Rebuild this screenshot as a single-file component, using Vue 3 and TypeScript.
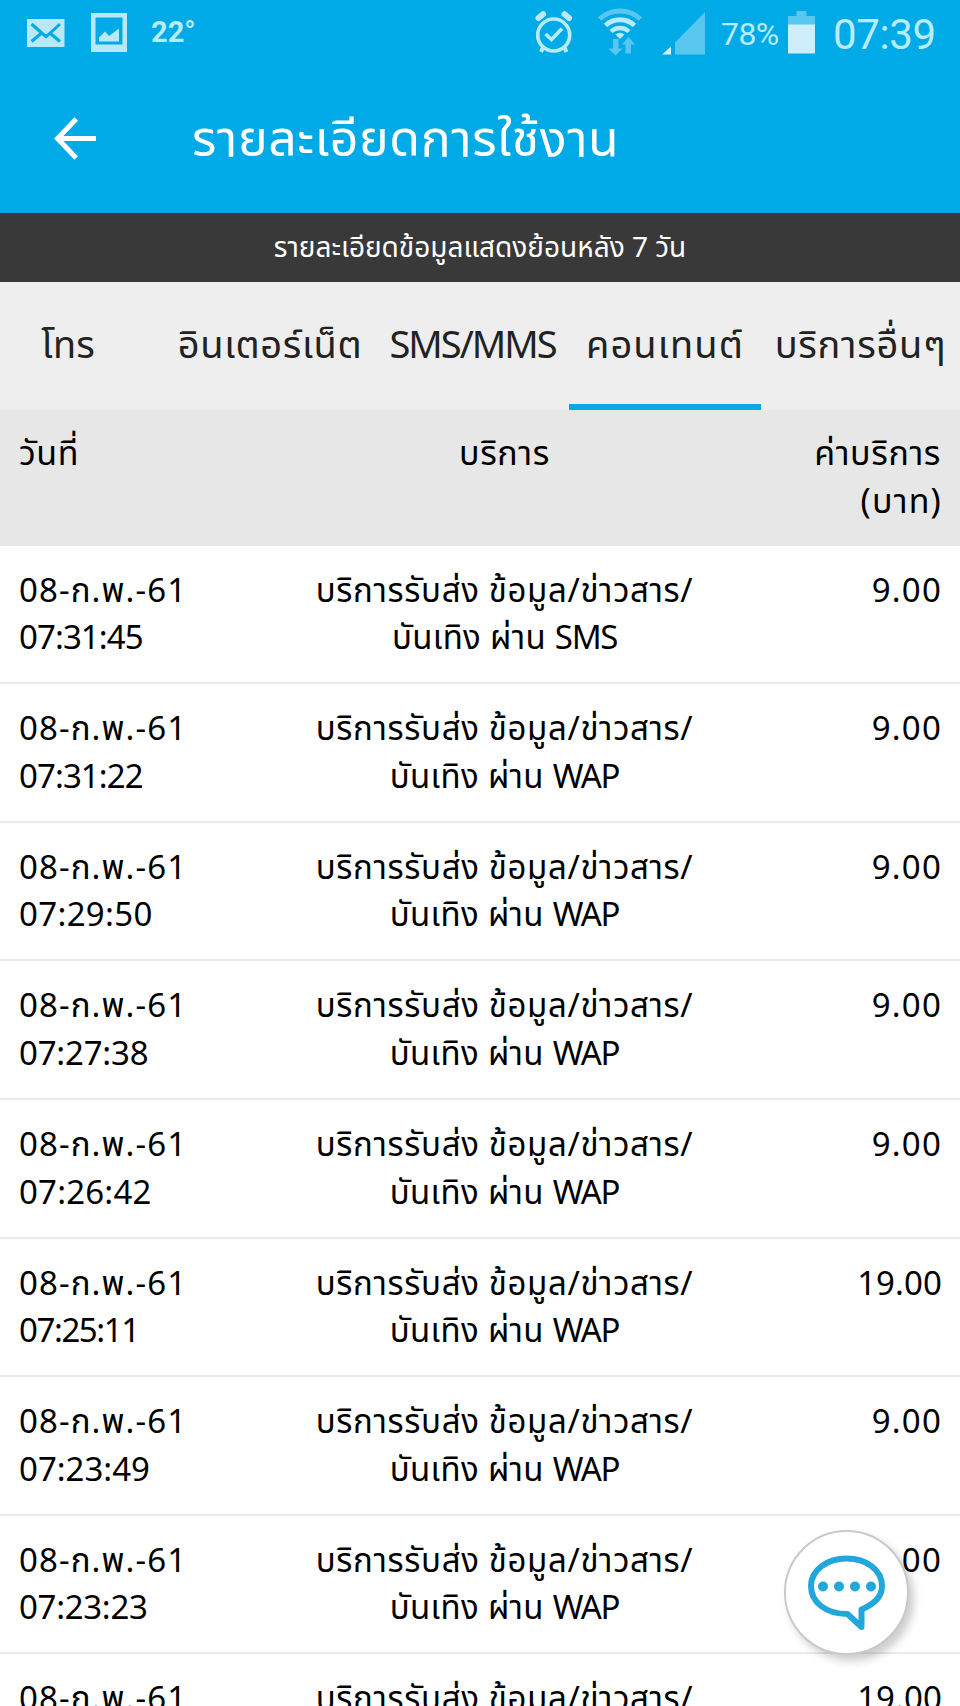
<script setup lang="ts">
import { ref } from 'vue'

interface Tab { label: string; width: number; fit: string }
interface Usage { time: string; track: number; channel: 'SMS' | 'WAP'; amount: string }

const tabs: Tab[] = [
  { label: 'โทร', width: 192, fit: 'tel' },
  { label: 'อินเตอร์เน็ต', width: 212, fit: 'net' },
  { label: 'SMS/MMS', width: 193, fit: 'sms' },
  { label: 'คอนเทนต์', width: 192, fit: 'content' },
  { label: 'บริการอื่นๆ', width: 199, fit: 'other' },
]
const active = ref(3)

// track: letter spacing in px, tightened for times with narrow digits
const rows: Usage[] = [
  { time: '07:31:45', track: -0.9, channel: 'SMS', amount: '9.00' },
  { time: '07:31:22', track: -0.9, channel: 'WAP', amount: '9.00' },
  { time: '07:29:50', track: 0.35, channel: 'WAP', amount: '9.00' },
  { time: '07:27:38', track: -0.2, channel: 'WAP', amount: '9.00' },
  { time: '07:26:42', track: 0.2, channel: 'WAP', amount: '9.00' },
  { time: '07:25:11', track: -1.4, channel: 'WAP', amount: '19.00' },
  { time: '07:23:49', track: 0, channel: 'WAP', amount: '9.00' },
  { time: '07:23:23', track: -0.3, channel: 'WAP', amount: '9.00' },
  { time: '07:22:58', track: 0, channel: 'WAP', amount: '19.00' },
]
</script>

<template>
  <main class="screen">
    <header class="top">
      <div class="status">
        <svg class="mail" width="38" height="28" viewBox="0 0 38 28">
          <path fill="#b9e8f8" d="M0 0h37.500v28H0z" />
          <path fill="none" stroke="#00aae7" stroke-width="3" d="M4.500 5 L16.500 15.500 L19 17.500 L21.500 15.500 L33 5 M4.500 22.500 L14 14.500 M33 22.500 L23.500 14.500" />
        </svg>
        <svg class="photo" width="36" height="39" viewBox="0 0 36 39">
          <path fill="#b9e8f8" fill-rule="evenodd" d="M0 0h36v39H0zM4.500 4.500v27h27v-27z" />
          <path fill="#b9e8f8" d="M8 28.500v-4l6-6 4 4.500 10-7.500v13z" />
        </svg>
        <span class="temp">22°</span>
        <span class="grow"></span>
        <svg class="alarm" width="40" height="42" viewBox="0 0 40 42">
          <g fill="none" stroke="#b9ecfa">
            <circle cx="19.700" cy="24" r="16" stroke-width="3.600" />
            <path stroke-width="6" stroke-linecap="round" d="M4.500 7 L9 3.200 M30.500 3.200 L35 7" />
            <path stroke-width="3.600" d="M11.500 23 L17.500 28.500 L28 17.500" />
            <path stroke-width="4" d="M9 36.500 L7 41 M30.500 36.500 L32.500 41" />
          </g>
        </svg>
        <svg class="wifi" width="44" height="48" viewBox="0 0 44 48">
          <g fill="none" stroke-width="5">
            <path stroke="#58c7ef" d="M1.500 11 A30 30 0 0 1 42.500 11" />
            <g stroke="#b9ecfa">
              <path d="M7.500 17.500 A21.500 21.500 0 0 1 36.500 17.500" />
              <path stroke-width="4.500" d="M13 23.500 A13 13 0 0 1 31 23.500" />
            </g>
          </g>
          <path fill="#b9ecfa" d="M17.500 26.500 Q22 23 26.500 26.500 L22 31z" />
          <path fill="#58c7ef" d="M15 31h5.500v9.500h4L17.500 47.500 L10.500 40.500h4.500zM27.500 45.500h5.500v-9h4L30.500 29 L24 36.500h3.500z" />
        </svg>
        <svg class="signal" width="44" height="43" viewBox="0 0 44 43">
          <path fill="#58c7ef" d="M43 0v42.500H13V30.500z" />
          <path fill="#d3f2fb" d="M9 34.500v8H0z" />
        </svg>
        <span class="percent">78%</span>
        <svg class="battery" width="27" height="43" viewBox="0 0 27 43">
          <path fill="#58c7ef" d="M8.500 0h10v5H27v9H0V5h8.500z" />
          <path fill="#cdeefa" d="M0 13.500h27v29H0z" />
        </svg>
        <span class="clock">07:39</span>
      </div>
      <div class="titlebar">
        <svg class="back" width="43" height="43" viewBox="0 0 43 43">
          <path fill="none" stroke="#fff" stroke-width="5" d="M42 21.500H4 M22.200 2 L3.500 21.500 L22.200 41" />
        </svg>
        <h1 class="title">รายละเอียดการใช้งาน</h1>
      </div>
    </header>
    <p class="notice">รายละเอียดข้อมูลแสดงย้อนหลัง 7 วัน</p>
    <nav class="tabs">
      <button
        v-for="(tab, i) in tabs"
        :key="tab.label"
        class="tab"
        :class="{ active: i === active }"
        :style="{ width: tab.width + 'px' }"
        @click="active = i"
      >
        <span class="txt" :class="tab.fit">{{ tab.label }}</span>
      </button>
    </nav>
    <section class="table">
      <div class="row head">
        <div class="date"><span class="txt">วันที่</span></div>
        <div class="service"><span class="txt">บริการ</span></div>
        <div class="fee"><span class="txt">ค่าบริการ</span><span class="txt baht">(บาท)</span></div>
      </div>
      <div v-for="row in rows" :key="row.time" class="row">
        <div class="date">
          <span class="txt day">08-ก.พ.-61</span>
          <span class="txt time" :style="{ letterSpacing: row.track + 'px' }">{{ row.time }}</span>
        </div>
        <div class="service">
          <span class="txt line1">บริการรับส่ง ข้อมูล/ข่าวสาร/</span>
          <span class="txt line2">บันเทิง ผ่าน <span class="channel">{{ row.channel }}</span></span>
        </div>
        <div class="fee"><span class="txt amount" :class="{ wide: row.amount.length > 4 }">{{ row.amount }}</span></div>
      </div>
    </section>
    <button class="chat" aria-label="Chat">
      <svg width="80" height="78" viewBox="0 0 80 78">
        <path fill="none" stroke="#22a7dc" stroke-width="6" stroke-linejoin="round" d="M39.500 4.500 C59 4.500 75 15.500 75 32 C75 42 67.500 50 54.500 55.500 V73 L40.500 60 C18.500 60 4 48 4 32 C4 15.500 20.500 4.500 39.500 4.500z" />
        <g fill="#22a7dc">
          <circle cx="16" cy="32.500" r="5" /><circle cx="32" cy="32.500" r="5" />
          <circle cx="48" cy="32.500" r="5" /><circle cx="64" cy="32.500" r="5" />
        </g>
      </svg>
    </button>
  </main>
</template>

<style>
body { margin: 0; overflow: hidden; }
</style>

<style scoped>
.screen {
  position: relative;
  width: 960px;
  height: 1706px;
  overflow: hidden;
  background: #fff;
  color: #000;
  font-family: "Noto Sans", "Noto Sans Thai", "Loma", sans-serif;
}
.txt { display: block; width: max-content; white-space: nowrap; }
.top { height: 213px; background: #00aae7; color: #fff; }
.status { display: flex; align-items: flex-start; height: 66px; padding: 0 25px 0 27px; font-family: Roboto, sans-serif; color: #b9ecfa; }
.status > * { flex: none; }
.mail { margin-top: 19px; }
.photo { margin: 13px 0 0 26px; }
.temp { margin: 14px 0 0 24px; font-size: 29px; line-height: 36px; font-weight: 700; }
.status > .grow { flex: 1; }
.alarm { margin-top: 11px; }
.wifi { margin: 8px 0 0 24px; }
.signal { margin: 12px 0 0 20px; }
.percent { width: 59px; margin: 14px 0 0 15px; font-size: 32px; line-height: 40px; font-weight: 400; letter-spacing: -0.6px; }
.battery { margin: 11px 0 0 8px; }
.clock { width: 102px; margin: 10px 0 0 18px; font-size: 42px; line-height: 50px; font-weight: 400; letter-spacing: -0.4px; }
.titlebar { display: flex; align-items: center; height: 147px; padding: 0 0 2px 54px; box-sizing: border-box; }
.title { margin: -4px 0 0 95px; font-size: 50px; font-weight: 400; line-height: 80px; letter-spacing: 0.6px; white-space: nowrap; }
.notice { margin: 0; height: 69px; background: #393939; color: #fff; font-size: 28px; line-height: 67px; text-align: center; }
.tabs { display: flex; height: 128px; margin-left: -28px; background: #eee; color: #222; }
.tab { flex: none; display: flex; justify-content: center; align-items: center; padding: 0; border: 0; border-bottom: 6px solid transparent; background: none; font: inherit; font-size: 38px; line-height: 60px; color: inherit; }
.tab.active { border-bottom-color: #08aae6; }
.net { letter-spacing: 0.6px; }
.sms { letter-spacing: -2px; }
.content { letter-spacing: 1.1px; }
.other { letter-spacing: 0.7px; }
.row { display: grid; grid-template-columns: 220px 531px 1fr; height: 138.600px; box-sizing: border-box; padding: 20px 19px 0; border-bottom: 2px solid #ebebeb; font-size: 33px; line-height: 47.500px; }
.head { height: 135.700px; padding-top: 19px; background: #e7e7e7; border-bottom: 0; font-size: 34px; letter-spacing: 0.6px; }
.baht { letter-spacing: 1.2px; margin-right: -1px; }
.day { letter-spacing: 1.1px; }
.line1 { letter-spacing: 0.650px; }
.line2 { letter-spacing: 0.300px; }
.channel { letter-spacing: -1.300px; }
.day, .time, .amount { font-weight: 450; }
.amount { margin-right: -1px; letter-spacing: 1.2px; }
.amount.wide { letter-spacing: 0.1px; }
.service { display: flex; flex-direction: column; align-items: center; }
.fee { display: flex; flex-direction: column; align-items: flex-end; }
.chat { position: absolute; left: 784px; top: 1530px; width: 125px; height: 125px; display: flex; align-items: center; justify-content: center; padding: 0; border: 2px solid #c9c9c9; border-radius: 50%; background: #fff; box-shadow: 5px 6px 8px rgba(0, 0, 0, 0.2); }
</style>
